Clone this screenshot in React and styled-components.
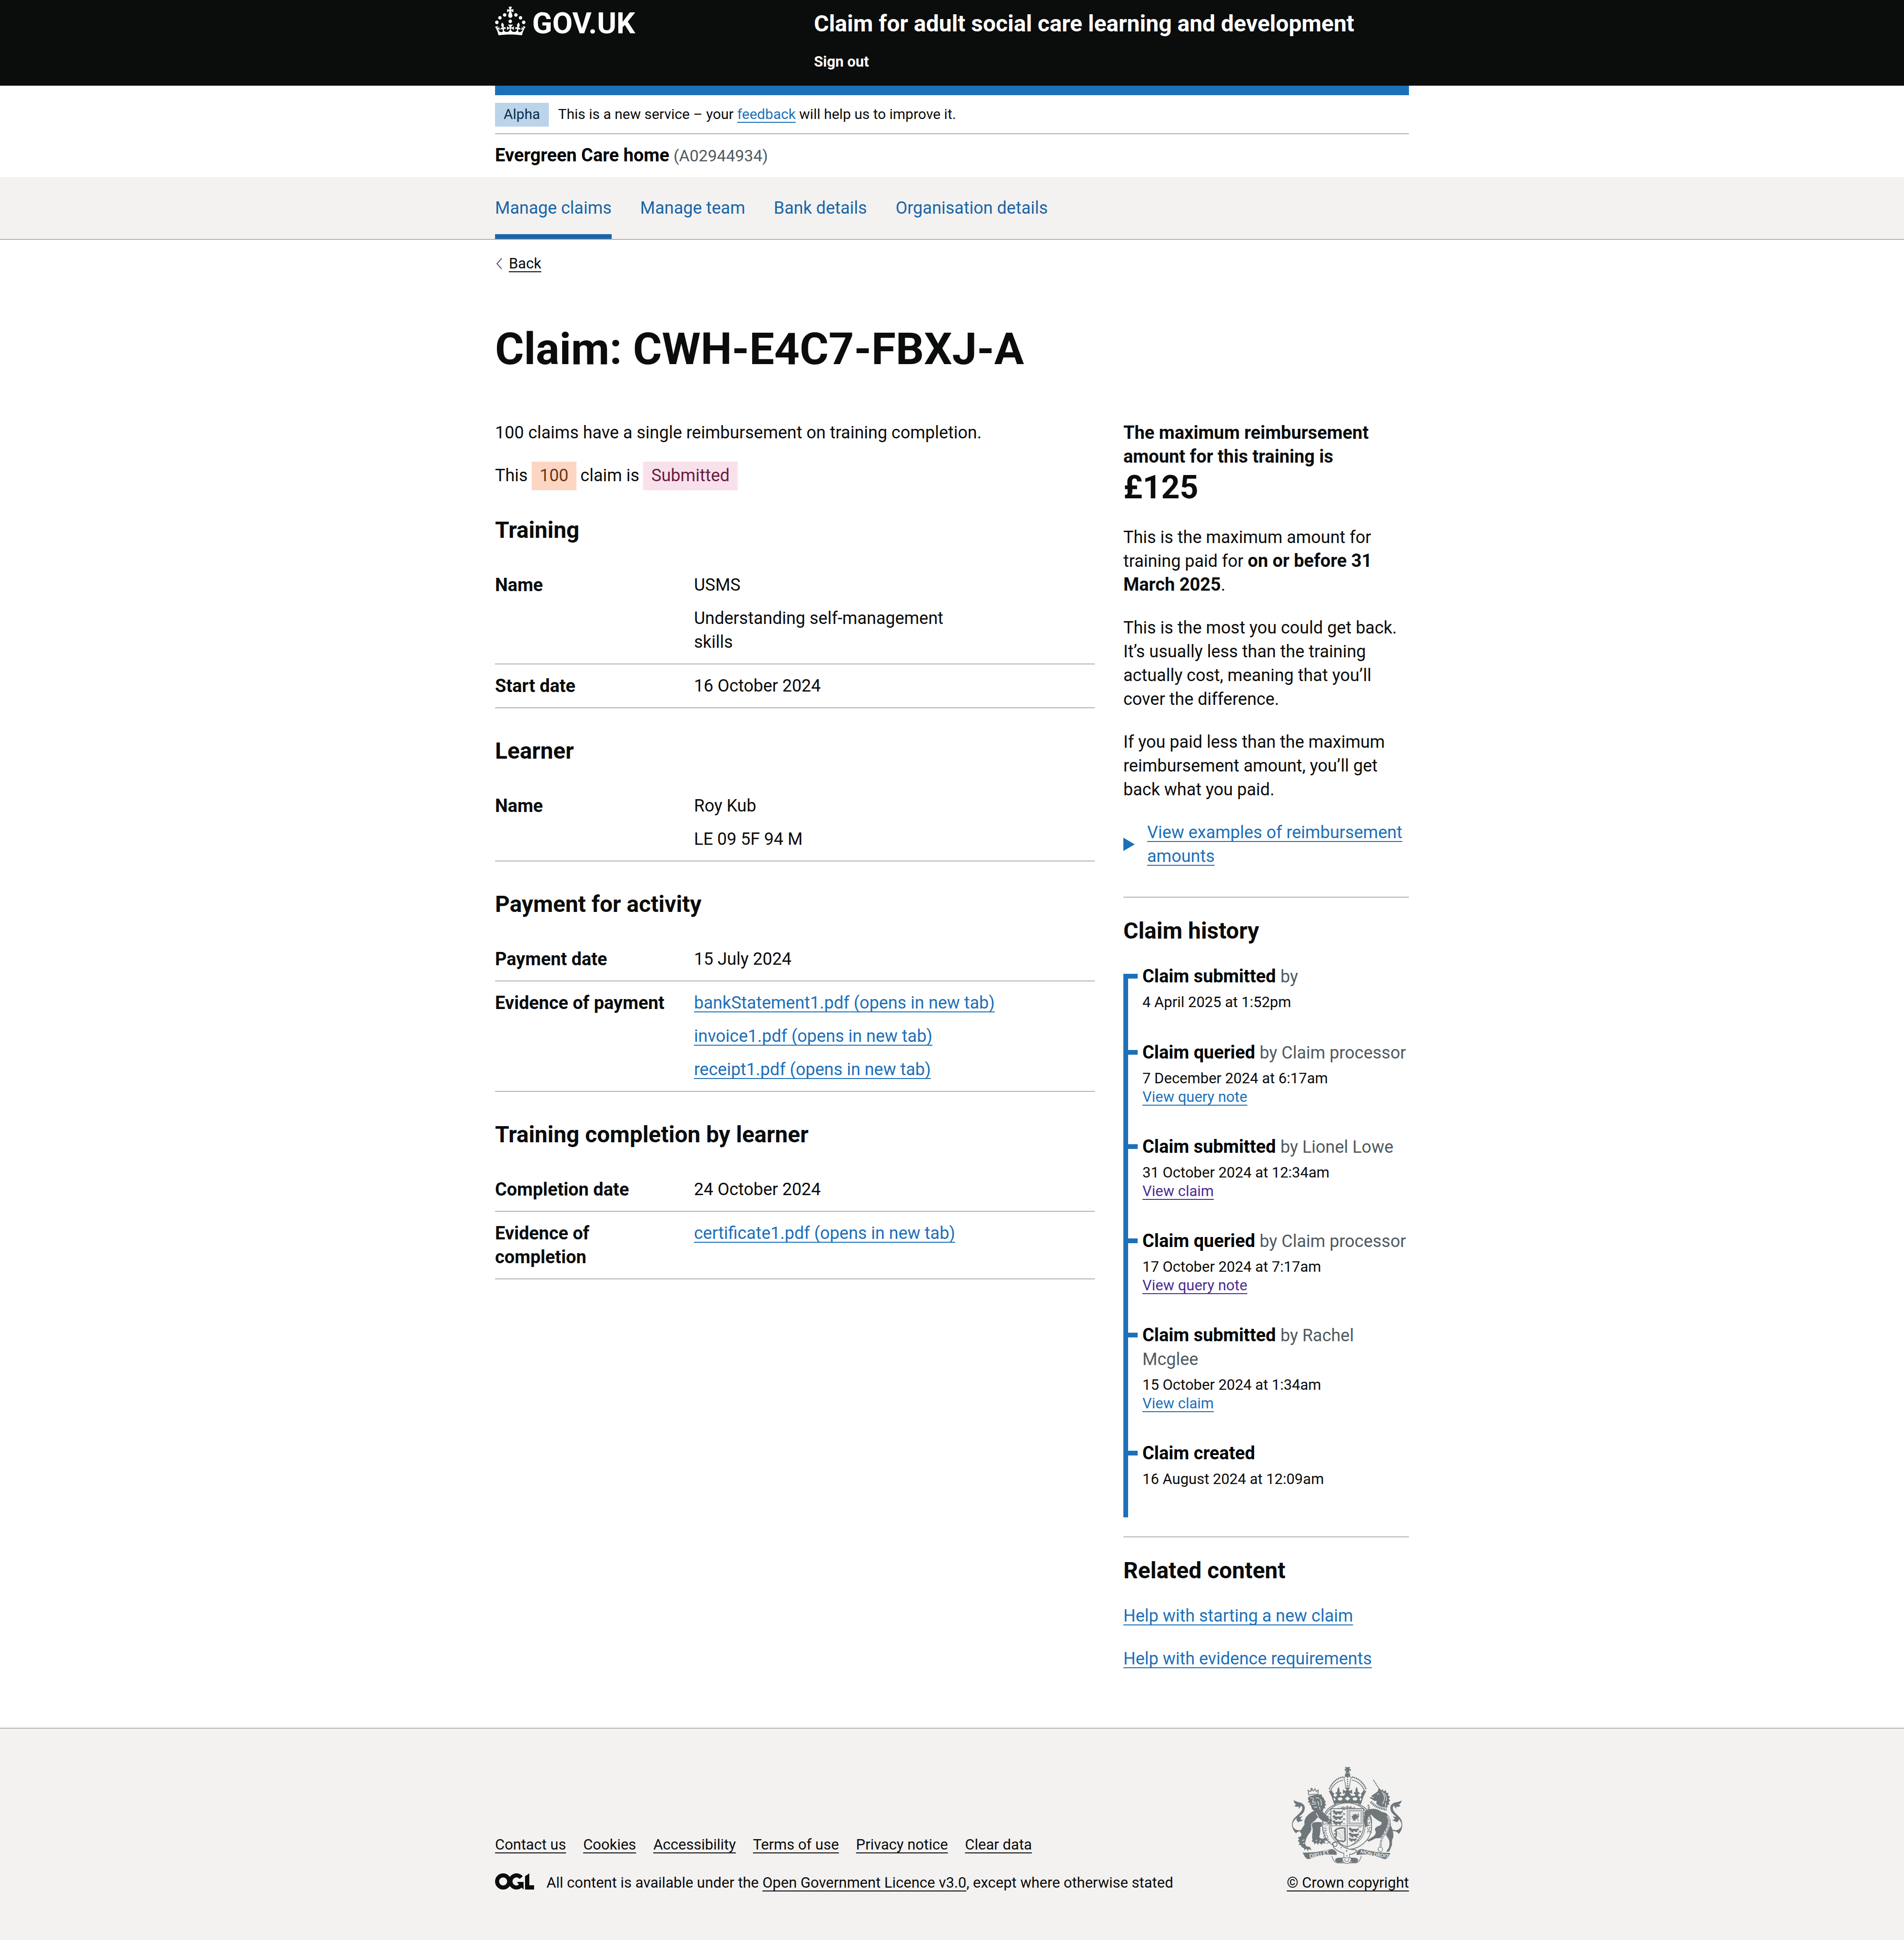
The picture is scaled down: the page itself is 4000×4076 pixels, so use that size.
import React from "react";
import styled, { createGlobalStyle } from "styled-components";

const color = {
  text: "#0b0c0c",
  link: "#1d70b8",
  visited: "#4c2c92",
  nav: "#1a65a6",
  secondary: "#505a5f",
  border: "#b1b4b6",
  panel: "#f3f2f1",
  crest: "#6f777b",
};

const tagTones = {
  blue: { bg: "#bbd4ea", fg: "#0c2d4a" },
  orange: { bg: "#fcd6c3", fg: "#6e3619" },
  pink: { bg: "#f9e1ec", fg: "#6b1c40" },
};

const GlobalStyle = createGlobalStyle`
  *, *::before, *::after { box-sizing: border-box; }
  body {
    margin: 0;
    background: #ffffff;
    color: ${color.text};
    font-family: Roboto, "Liberation Sans", Arial, sans-serif;
    font-size: 36px;
    line-height: 50px;
  }
  h1, h2, h3, p, ul, ol, dl, dd, dt { margin: 0; padding: 0; }
  ul, ol { list-style: none; }
  strong { font-size: 38px; line-height: 1; font-weight: 700; }
`;

const Container = styled.div`
  max-width: 1920px;
  margin: 0 auto;
`;

const Link = styled.a`
  color: ${(p) => (p.$visited ? color.visited : p.$dark ? color.text : color.link)};
  text-decoration: underline;
  text-decoration-thickness: 2px;
  text-underline-offset: 6px;
  text-decoration-skip-ink: none;
`;

/* Header */

const Header = styled.header`
  background: ${color.text};
  color: #ffffff;
`;

const HeaderInner = styled(Container)`
  display: grid;
  grid-template-columns: 670px 1fr;
  padding: 14px 0 30px;
`;

const LogoLink = styled.a`
  color: #ffffff;
  text-decoration: none;
`;

const LogoSvg = styled.svg`
  display: block;
  width: 300px;
  height: 60px;
  overflow: visible;
`;

const LogoText = styled.text`
  font-family: Roboto, "Liberation Sans", Arial, sans-serif;
  font-size: 62px;
  font-weight: 700;
`;

const HeaderContent = styled.div`
  display: flex;
  flex-direction: column;
  align-items: flex-start;
  gap: 30px;
  padding-top: 6px;
`;

const ServiceName = styled.a`
  color: #ffffff;
  font-size: 48px;
  line-height: 60px;
  font-weight: 700;
  text-decoration: none;
`;

const SignOut = styled.a`
  color: #ffffff;
  font-size: 31px;
  line-height: 40px;
  font-weight: 700;
  text-decoration: none;
`;

const BlueBar = styled(Container)`
  height: 20px;
  background: ${color.link};
`;

/* Phase banner and organisation */

const PhaseBanner = styled(Container)`
  display: flex;
  align-items: baseline;
  gap: 20px;
  padding: 16px 0 14px;
  border-bottom: 2px solid ${color.border};
  font-size: 30px;
  line-height: 40px;
`;

const Tag = styled.span`
  display: inline-block;
  padding: ${(p) => (p.$small ? "4px 18px 6px" : "4px 17px 6px")};
  line-height: ${(p) => (p.$small ? "40px" : "50px")};
  background: ${(p) => tagTones[p.$tone].bg};
  color: ${(p) => tagTones[p.$tone].fg};
`;

const Organisation = styled(Container)`
  padding: 20px 0;
  color: #000000;
`;

const OrganisationId = styled.span`
  font-size: 34px;
  line-height: 1;
  color: ${color.secondary};
`;

/* Service navigation */

const NavBar = styled.nav`
  background: ${color.panel};
  border-bottom: 2px solid ${color.border};
`;

const NavList = styled.ul`
  display: flex;
  gap: 60px;
  max-width: 1920px;
  margin: 0 auto;
`;

const NavLink = styled.a`
  display: block;
  padding: 40px 0 30px;
  border-bottom: 10px solid ${(p) => (p.$current ? color.nav : "transparent")};
  color: ${color.nav};
  text-decoration: none;
`;

/* Page */

const BackRow = styled.div`
  display: flex;
  align-items: center;
  gap: 14px;
  padding-top: 30px;
  font-size: 31px;
  line-height: 40px;
`;

const Chevron = styled.svg`
  width: 15px;
  height: 24px;
`;

const PageTitle = styled.h1`
  margin: 110px 0 100px;
  font-size: 93px;
  line-height: 100px;
  font-weight: 700;
`;

const Columns = styled.div`
  display: grid;
  grid-template-columns: minmax(0, 1260px) minmax(0, 600px);
  gap: 60px;
  padding-bottom: 120px;
`;

const Paragraph = styled.p`
  margin-bottom: 40px;
`;

const StatusLine = styled.p`
  display: flex;
  flex-wrap: wrap;
  align-items: baseline;
  gap: 8px;
  margin: -4px 0 34px;
`;

const Heading = styled.h2`
  margin-bottom: 40px;
  font-size: 48px;
  line-height: 60px;
  font-weight: 700;
`;

const Section = styled.section`
  padding-top: 20px;
  & + & { padding-top: 60px; }
`;

const SummaryList = styled.dl`
  display: block;
`;

const SummaryRow = styled.div`
  display: grid;
  grid-template-columns: 30% 1fr;
  column-gap: 40px;
  padding: 20px 0;
  border-bottom: 2px solid ${color.border};
`;

const Key = styled.dt`
  font-size: 38px;
  font-weight: 700;
`;

const Value = styled.dd`
  display: grid;
  gap: 20px;
  max-width: ${(p) => (p.$narrow ? "560px" : "none")};
`;

const AmountHeading = styled.h3`
  margin-bottom: 40px;
  font-size: 38px;
  line-height: 50px;
  font-weight: 700;
`;

const Amount = styled.span`
  display: block;
  font-size: 68px;
  line-height: 80px;
`;

const ExamplesSummary = styled.summary`
  display: flex;
  align-items: center;
  gap: 26px;
  list-style: none;
  cursor: pointer;
  color: ${color.link};
  text-decoration: underline;
  text-decoration-thickness: 2px;
  text-underline-offset: 6px;
  text-decoration-skip-ink: none;
  &::-webkit-details-marker { display: none; }
`;

const Triangle = styled.svg`
  flex: none;
  width: 24px;
  height: 28px;
`;

const SideSection = styled.section`
  margin-top: ${(p) => (p.$tight ? "40px" : "60px")};
  padding-top: 40px;
  border-top: 2px solid ${color.border};
`;

const Timeline = styled.ol`
  display: grid;
  grid-template-columns: 10px 1fr;
`;

const TimelineBar = styled.li`
  grid-column: 1;
  grid-row: 1 / span 6;
  margin-top: 20px;
  background: ${color.link};
`;

const TimelineItem = styled.li`
  grid-column: 2;
  display: grid;
  grid-template-columns: 20px 1fr;
  column-gap: 10px;
  padding-bottom: 60px;
`;

const Tick = styled.span`
  height: 10px;
  margin-top: 20px;
  background: ${color.link};
`;

const EventTitle = styled.h3`
  font-size: 38px;
  line-height: 50px;
  font-weight: 700;
  color: #000000;
`;

const EventBy = styled.span`
  font-size: 36px;
  line-height: 1;
  font-weight: 400;
  color: ${color.secondary};
`;

const EventDate = styled.p`
  margin-top: 10px;
  font-size: 31px;
  line-height: 40px;
`;

const EventAction = styled.p`
  font-size: 31px;
  line-height: 38px;
`;

const RelatedList = styled.ul`
  display: grid;
  gap: 40px;
`;

/* Footer */

const Footer = styled.footer`
  background: ${color.panel};
  border-top: 2px solid ${color.border};
  font-size: 31px;
  line-height: 40px;
`;

const FooterInner = styled(Container)`
  display: flex;
  justify-content: space-between;
  align-items: flex-end;
  padding: 80px 0 100px;
`;

const FooterMeta = styled.div`
  display: grid;
  gap: 40px;
`;

const FooterLinks = styled.ul`
  display: flex;
  flex-wrap: wrap;
  gap: 36px;
`;

const Licence = styled.div`
  display: flex;
  align-items: flex-start;
  gap: 26px;
`;

const OglLogo = styled.svg`
  width: 82px;
  height: 34px;
`;

const Copyright = styled.div`
  display: flex;
  flex-direction: column;
  align-items: flex-end;
  gap: 20px;
`;

const CrestSvg = styled.svg`
  display: block;
  width: 232px;
  height: 204px;
  margin-right: 14px;
  overflow: visible;
`;

const CrestText = styled.text`
  font-family: Lato, "Liberation Sans", sans-serif;
  font-weight: ${(p) => (p.$heavy ? 700 : 400)};
`;

const CROWN =
  "M22.6 10.4c-1 .4-2-.1-2.4-1-.4-.9.1-2 1-2.4.9-.4 2 .1 2.4 1s-.1 2-1 2.4m-5.9 6.7c-.9.4-2-.1-2.4-1-.4-.9.1-2 1-2.4.9-.4 2 .1 2.4 1s-.1 2-1 2.4m10.8-3.7c-1 .4-2-.1-2.4-1-.4-.9.1-2 1-2.4.9-.4 2 .1 2.4 1s0 2-1 2.4m3.3 4.8c-1 .4-2-.1-2.4-1-.4-.9.1-2 1-2.4.9-.4 2 .1 2.4 1s-.1 2-1 2.4M17 4.7l2.3 1.2V2.5l-2.3.7-.2-.2.9-3h-3.4l.9 3-.2.2c-.1.1-2.3-.7-2.3-.7v3.4L15 4.7c.1.1.1.2.2.2l-1.3 4c-.1.2-.1.4-.1.6 0 1.1.8 2 1.9 2.2h.7c1-.2 1.9-1.1 1.9-2.1 0-.2 0-.4-.1-.6l-1.3-4c-.1-.2 0-.2.1-.3m-7.6 5.7c.9.4 2-.1 2.4-1 .4-.9-.1-2-1-2.4-.9-.4-2 .1-2.4 1s0 2 1 2.4m-5 3c.9.4 2-.1 2.4-1 .4-.9-.1-2-1-2.4-.9-.4-2 .1-2.4 1s.1 2 1 2.4m-3.2 4.8c.9.4 2-.1 2.4-1 .4-.9-.1-2-1-2.4-.9-.4-2 .1-2.4 1s0 2 1 2.4m14.8 11c4.4 0 8.6.3 12.3.8 1.1-4.5 2.4-7 3.7-8.8l-2.5-.9c.2 1.3.3 1.9 0 2.7-.4-.4-.8-1.1-1.1-2.3l-1.2 4c.7-.5 1.3-.8 2-.9-1.1 2.5-2.6 3.1-3.5 3-1.1-.2-1.7-1.2-1.5-2.1.3-1.2 1.5-1.5 2.1-.1 1.1-2.3-.8-3-2-2.3 1.9-1.9 2.1-3.5.6-5.6-2.1 1.6-2.1 3.2-1.2 5.5-1.2-1.4-3.2-.6-2.5 1.6.9-1.4 2.1-.5 1.9.8-.2 1.1-1.7 2.1-3.5 1.9-2.7-.2-2.9-2.1-2.9-3.6.7-.1 1.9.5 2.9 1.9l.4-4.3c-1.1 1.1-2.1 1.4-3.2 1.4.4-1.2 2.1-3 2.1-3h-5.4s1.7 1.9 2.1 3c-1.1 0-2.1-.2-3.2-1.4l.4 4.3c1-1.4 2.2-2 2.9-1.9-.1 1.5-.2 3.4-2.9 3.6-1.9.2-3.4-.8-3.5-1.9-.2-1.3 1-2.2 1.9-.8.7-2.3-1.2-3-2.5-1.6.9-2.2.9-3.9-1.2-5.5-1.5 2-1.3 3.7.6 5.6-1.2-.7-3.1 0-2 2.3.6-1.4 1.8-1.1 2.1.1.2.9-.3 1.9-1.5 2.1-.9.2-2.4-.5-3.5-3 .6 0 1.2.3 2 .9l-1.2-4c-.3 1.1-.7 1.9-1.1 2.3-.3-.8-.2-1.4 0-2.7l-2.9.9C1.3 23 2.6 25.5 3.7 30c3.7-.5 7.9-.8 12.3-.8";

function Lion({ x, y, s = 1 }) {
  return (
    <g transform={`translate(${x} ${y}) scale(${s})`} fill={color.crest}>
      <path d="M0 4q8-8 16-3l2 6h34q8-2 10-8l3 12q-6 8-14 8l6 8h-14l-6-6H28l4 8H18l-2-8q-8 4-14 1l10-6Q0 14 0 4z" />
      <path d="M62-2q10-8 18 0M66 18q6 6 14 2" fill="none" stroke={color.crest} strokeWidth="4" />
    </g>
  );
}

/* Royal coat of arms: crown, garter and shield between the lion and the unicorn. */
function Crest() {
  const c = color.crest;
  const bg = color.panel;
  return (
    <CrestSvg viewBox="162 95 696 613" aria-hidden="true">
      {/* garter */}
      <ellipse cx="510" cy="470" rx="155" ry="147" fill={bg} stroke={c} strokeWidth="5" />
      <path d="M356 455C350 400 390 345 440 332M664 455C670 400 630 345 580 332" fill="none" stroke={c} strokeWidth="5" />
      <ellipse cx="510" cy="472" rx="113" ry="122" fill="none" stroke={c} strokeWidth="4" />
      <path id="garter-line" d="M408 570A128 126 0 1 1 612 570" fill="none" />
      <CrestText fontSize="37" fill={c}>
        <textPath href="#garter-line">HONI·SOIT·QUI·MAL·Y·PENSE</textPath>
      </CrestText>

      {/* shield */}
      <path d="M408 360H614V470C614 530 570 580 511 602C450 580 408 530 408 470Z" fill={bg} stroke={c} strokeWidth="5" />
      <path d="M511 360V600M408 468H614" stroke={c} strokeWidth="4" />
      <Lion x={418} y={370} />
      <Lion x={418} y={402} />
      <Lion x={418} y={434} />
      <Lion x={520} y={480} />
      <Lion x={520} y={512} />
      <Lion x={520} y={544} s={0.8} />
      <rect x="522" y="370" width="82" height="86" fill="none" stroke={c} strokeWidth="4" />
      <rect x="530" y="378" width="66" height="70" fill="none" stroke={c} strokeWidth="2" />
      <path d="M545 392l10 6 6-8 8 8 10-6-4 14 10-4-2 12-12 2 4 10-10-2-4 14-8-6-8 6 4-16-12 2 6-10-8-8 14-2z" fill={c} />
      <path d="M580 388q8 14 0 26t2 24" fill="none" stroke={c} strokeWidth="4" />
      <path d="M438 494q20-16 58-12l2 72q-6 20-20 10q-30 4-42-20q12-22 2-50z" fill="none" stroke={c} strokeWidth="9" />
      <path d="M450 500l40 44M450 512l36 40M450 526l28 30M464 494l28 30M478 492l16 18" stroke={c} strokeWidth="2" />
      <path d="M428 500h12M426 520h14M426 540h12" stroke={c} strokeWidth="7" />

      {/* imperial crown */}
      <path d="M496 97H530L524 110H534V122L521 117L527 134H499L505 117L495 122V108L504 111Z" fill={c} />
      <circle cx="513" cy="148" r="17" fill={c} />
      <path d="M498 134H528" stroke={bg} strokeWidth="2" />
      <path d="M481 161Q425 172 398 236M545 161Q601 172 630 236" fill="none" stroke={c} strokeWidth="10" strokeLinecap="round" strokeDasharray="0.1 12.5" />
      <path d="M486 179Q430 188 404 250M540 179Q596 188 622 250" fill="none" stroke={c} strokeWidth="5" />
      <path d="M489 162Q497 180 500 218L526 218Q529 180 537 162Q513 150 489 162Z" fill={bg} stroke={c} strokeWidth="4" />
      <path d="M513 162V216" fill="none" stroke={c} strokeWidth="9" strokeLinecap="round" strokeDasharray="0.1 13" />
      <path d="M428 332L413 284L394 247L408 250L411 240Q420 262 430 264Q418 280 432 284Q448 286 446 268Q438 264 436 268Q436 252 448 256Q446 236 456 222Q466 238 462 256Q474 250 474 266Q468 264 464 270Q468 288 484 282Q496 276 498 258L484 268V238L498 248L508 240L494 226H532L518 240L528 248L542 238V268L528 258Q530 276 542 282Q558 288 562 270Q558 264 552 266Q552 250 564 256Q560 238 570 222Q580 236 578 256Q590 252 590 268Q588 264 580 268Q578 286 594 284Q608 280 596 264Q606 262 615 240L618 250L632 247L613 284L598 332Q513 312 428 332Z" fill={c} />
      <path d="M424 286Q513 268 602 286L596 318Q513 300 430 318Z" fill={c} />
      <path d="M513 283l17 13-17 13-17-13z" fill={bg} />
      <ellipse cx="466" cy="298" rx="15" ry="10" fill={bg} />
      <ellipse cx="560" cy="298" rx="15" ry="10" fill={bg} />
      <path d="M424 296l8-6 6 14-8 6zM602 296l-8-6-6 14 8 6z" fill={bg} />

      {/* lion supporter */}
      <path d="M268 274L264 244L278 252L286 236L298 248L308 234L316 252L328 242L326 270Q298 264 268 274Z" fill="none" stroke={c} strokeWidth="5" />
      <path d="M286 228V248M278 234H294" stroke={c} strokeWidth="5" />
      <path d="M266 286Q300 268 350 270L352 284Q366 290 366 304L376 316L370 324L378 338L368 344L374 358L360 358L358 374Q330 382 300 372L288 362L282 340L272 332L280 326L262 318L270 306L262 300Z" fill={c} />
      <path d="M276 294Q288 288 298 296M312 292Q324 288 334 296M298 298L292 318H312M286 330Q300 336 316 326M322 312Q334 320 330 340M340 300Q352 316 346 340M300 348Q312 356 322 346M336 348L340 366" fill="none" stroke={bg} strokeWidth="4" />
      <path d="M300 374Q270 388 250 414Q236 440 242 458Q228 480 212 506Q228 520 218 534L200 542L208 556L198 562L212 576L204 586L220 592Q222 606 238 608L240 622L254 612L262 630L268 614L286 622L276 602L256 598Q244 592 246 572Q252 540 270 518Q286 504 286 470L290 472Q296 500 290 520Q288 546 292 556L286 566L300 572L304 586L316 574L326 588L334 574L350 588L356 576L374 582L366 562L384 556L374 546L350 550L334 540Q344 512 340 476L352 472L350 446Q322 440 286 450Q310 436 326 412Q352 440 384 446L396 462L402 452L418 460L410 444L418 430L398 426L384 404Q366 396 356 376Z" fill={c} />
      <path d="M290 450Q278 470 290 486M330 410Q318 400 316 386M240 556l-14 6M244 576l-14 4M320 556l-8 8M344 560l-8 8M400 436l-12 6" fill="none" stroke={bg} strokeWidth="4" />
      <path d="M240 488Q214 500 192 494Q160 480 168 450Q178 424 214 404Q248 380 242 346Q236 326 212 320Q196 318 172 306Q176 328 190 334L176 342Q190 352 206 346L204 362Q216 352 220 340Q234 352 222 374Q206 394 182 414Q160 434 162 466Q166 494 188 516Q196 502 216 502Q232 500 246 492Z" fill={c} />
      <path d="M198 398L212 412L228 406L214 426L232 432L200 446L190 430Z" fill={c} />
      <circle cx="190" cy="472" r="13" fill={bg} />

      {/* unicorn supporter */}
      <path d="M676 178L716 240" stroke={c} strokeWidth="6" strokeDasharray="9 3" />
      <path d="M650 290L668 286L664 278Q690 262 706 248Q704 238 712 232Q722 234 724 246L734 236L740 250L756 244L756 258L772 262L766 274L782 286L772 294L782 310L772 318L778 334L764 336L766 352L748 352Q724 350 700 334Q690 326 698 310Q682 314 668 300Z" fill={c} />
      <path d="M730 252Q746 270 746 296Q744 316 732 330M744 262Q762 282 758 312M700 268l12-2M668 290l10-2M752 322Q756 336 750 346" fill="none" stroke={bg} strokeWidth="4" />
      <path d="M660 316Q680 340 704 350T760 366" fill="none" stroke={c} strokeWidth="14" strokeDasharray="7 4" />
      <path d="M640 366Q690 350 728 380Q762 384 770 404Q790 424 786 466Q804 500 802 538Q790 560 794 586L784 612L776 630L756 632L774 604Q784 570 768 546Q752 524 746 498Q742 540 716 546Q690 544 672 556L646 568L636 560L664 542Q690 530 692 506Q674 484 706 470Q730 464 728 446Q690 430 662 396Q644 404 638 430L640 466L628 478L616 446L620 396Q612 378 640 366Z" fill={c} />
      <path d="M780 486Q806 500 828 494Q860 480 852 450Q842 424 812 404Q778 380 784 346Q790 326 814 320Q830 318 856 308Q850 328 836 334L848 342Q834 352 820 346L822 362Q810 352 806 340Q792 352 804 374Q820 394 842 414Q860 434 858 466Q858 496 836 520Q828 502 806 502Q790 498 780 486Z" fill={c} />
      <path d="M828 398L814 412L798 406L812 426L794 432L826 446L838 430Z" fill={c} />
      <circle cx="832" cy="472" r="13" fill={bg} />
      <path d="M762 404Q784 420 774 460Q760 506 738 534Q720 560 722 600" fill="none" stroke={bg} strokeWidth="16" />
      <path d="M762 404Q784 420 774 460Q760 506 738 534Q720 560 722 600" fill="none" stroke={c} strokeWidth="12" strokeDasharray="18 6" />
      <path d="M762 404Q784 420 774 460Q760 506 738 534Q720 560 722 600" fill="none" stroke={bg} strokeWidth="5" strokeDasharray="12 12" strokeDashoffset="-3" />
      <circle cx="720" cy="616" r="14" fill="none" stroke={c} strokeWidth="4" />
      <path d="M642 336Q654 352 640 372" fill="none" stroke={c} strokeWidth="12" strokeDasharray="7 4" />

      {/* buckle and scroll */}
      <path d="M229 637Q330 638 414 614Q434 618 444 636V652Q352 640 268 679Q248 676 240 656Z" fill={c} />
      <path d="M784 640Q690 638 600 614Q578 618 570 636V652Q660 640 746 679Q766 676 774 656Z" fill={c} />
      <path id="scroll-left" d="M274 672Q340 662 418 640" fill="none" />
      <path id="scroll-right" d="M592 640Q670 660 764 670" fill="none" />
      <CrestText $heavy fontSize="34" fill={bg}>
        <textPath href="#scroll-left">DIEU ET</textPath>
      </CrestText>
      <CrestText $heavy fontSize="31" fill={bg}>
        <textPath href="#scroll-right">MON DROIT</textPath>
      </CrestText>
      <path d="M414 658Q424 700 450 702H564Q590 700 600 658" fill="none" stroke={c} strokeWidth="4" />
      <path d="M434 682Q440 666 480 670V700H452Q436 698 434 682ZM580 682Q574 666 536 670V700H564Q578 698 580 682Z" fill={c} />
      <path d="M418 580Q424 566 448 570Q490 612 540 618Q566 616 570 626Q556 650 520 648Q460 640 426 606Z" fill={bg} stroke={c} strokeWidth="5" />
      <circle cx="434" cy="585" r="13" fill={bg} stroke={c} strokeWidth="5" />
      <circle cx="473" cy="606" r="4" fill={c} />
      <circle cx="507" cy="626" r="5" fill={c} />
      <path d="M490 640V676H526V644" fill={bg} stroke={c} strokeWidth="4" />
      <circle cx="508" cy="657" r="4" fill={c} />
      <path d="M480 670Q480 706 508 706T536 670Z" fill={bg} stroke={c} strokeWidth="4" />
      <path d="M496 676Q494 694 508 694T520 676" fill="none" stroke={c} strokeWidth="4" />
    </CrestSvg>
  );
}

const navItems = ["Manage claims", "Manage team", "Bank details", "Organisation details"];

const sections = [
  {
    title: "Training",
    rows: [
      { key: "Name", values: ["USMS", "Understanding self-management skills"], narrow: true },
      { key: "Start date", values: ["16 October 2024"] },
    ],
  },
  { title: "Learner", rows: [{ key: "Name", values: ["Roy Kub", "LE 09 5F 94 M"] }] },
  {
    title: "Payment for activity",
    rows: [
      { key: "Payment date", values: ["15 July 2024"] },
      { key: "Evidence of payment", files: ["bankStatement1.pdf", "invoice1.pdf", "receipt1.pdf"] },
    ],
  },
  {
    title: "Training completion by learner",
    rows: [
      { key: "Completion date", values: ["24 October 2024"] },
      { key: "Evidence of completion", files: ["certificate1.pdf"] },
    ],
  },
];

const history = [
  { title: "Claim submitted", by: "by", date: "4 April 2025 at 1:52pm" },
  { title: "Claim queried", by: "by Claim processor", date: "7 December 2024 at 6:17am", action: "View query note" },
  { title: "Claim submitted", by: "by Lionel Lowe", date: "31 October 2024 at 12:34am", action: "View claim", visited: true },
  { title: "Claim queried", by: "by Claim processor", date: "17 October 2024 at 7:17am", action: "View query note", visited: true },
  { title: "Claim submitted", by: "by Rachel Mcglee", date: "15 October 2024 at 1:34am", action: "View claim" },
  { title: "Claim created", date: "16 August 2024 at 12:09am" },
];

const footerLinks = ["Contact us", "Cookies", "Accessibility", "Terms of use", "Privacy notice", "Clear data"];

export default function App() {
  return (
    <>
      <GlobalStyle />
      <Header>
        <HeaderInner>
          <LogoLink href="#home" aria-label="GOV.UK">
            <LogoSvg viewBox="0 0 300 60" fill="currentColor">
              <path d={CROWN} transform="scale(2)" />
              <LogoText x="78" y="56">GOV.UK</LogoText>
            </LogoSvg>
          </LogoLink>
          <HeaderContent>
            <ServiceName href="#service">Claim for adult social care learning and development</ServiceName>
            <SignOut href="#sign-out">Sign out</SignOut>
          </HeaderContent>
        </HeaderInner>
      </Header>
      <BlueBar />
      <PhaseBanner>
        <Tag $tone="blue" $small>Alpha</Tag>
        <span>
          This is a new service – your <Link href="#feedback">feedback</Link> will help us to improve it.
        </span>
      </PhaseBanner>
      <Organisation>
        <strong>Evergreen Care home</strong> <OrganisationId>(A02944934)</OrganisationId>
      </Organisation>
      <NavBar aria-label="Service">
        <NavList>
          {navItems.map((item, i) => (
            <li key={item}>
              <NavLink href="#nav" $current={i === 0} aria-current={i === 0 ? "page" : undefined}>
                {item}
              </NavLink>
            </li>
          ))}
        </NavList>
      </NavBar>

      <Container as="main">
        <BackRow>
          <Chevron viewBox="0 0 15 24" aria-hidden="true">
            <path d="M14 1L4 12L14 23" fill="none" stroke={color.secondary} strokeWidth="2" />
          </Chevron>
          <Link href="#back" $dark>Back</Link>
        </BackRow>
        <PageTitle>Claim: CWH-E4C7-FBXJ-A</PageTitle>

        <Columns>
          <div>
            <Paragraph>100 claims have a single reimbursement on training completion.</Paragraph>
            <StatusLine>
              This <Tag $tone="orange">100</Tag> claim is <Tag $tone="pink">Submitted</Tag>
            </StatusLine>
            {sections.map((section) => (
              <Section key={section.title}>
                <Heading>{section.title}</Heading>
                <SummaryList>
                  {section.rows.map((row) => (
                    <SummaryRow key={row.key}>
                      <Key>{row.key}</Key>
                      <Value $narrow={row.narrow}>
                        {row.values && row.values.map((v) => <p key={v}>{v}</p>)}
                        {row.files &&
                          row.files.map((f) => (
                            <p key={f}>
                              <Link href="#file">{f} (opens in new tab)</Link>
                            </p>
                          ))}
                      </Value>
                    </SummaryRow>
                  ))}
                </SummaryList>
              </Section>
            ))}
          </div>

          <aside>
            <AmountHeading>
              The maximum reimbursement amount for this training is <Amount>£125</Amount>
            </AmountHeading>
            <Paragraph>
              This is the maximum amount for training paid for <strong>on or before 31 March 2025</strong>.
            </Paragraph>
            <Paragraph>
              This is the most you could get back. It’s usually less than the training actually cost, meaning that
              you’ll cover the difference.
            </Paragraph>
            <Paragraph>
              If you paid less than the maximum reimbursement amount, you’ll get back what you paid.
            </Paragraph>
            <details>
              <ExamplesSummary>
                <Triangle viewBox="0 0 24 28" aria-hidden="true">
                  <path d="M0 0L24 14L0 28Z" fill={color.link} />
                </Triangle>
                <span>View examples of reimbursement amounts</span>
              </ExamplesSummary>
            </details>

            <SideSection>
              <Heading>Claim history</Heading>
              <Timeline>
                <TimelineBar aria-hidden="true" />
                {history.map((event) => (
                  <TimelineItem key={event.date}>
                    <Tick />
                    <div>
                      <EventTitle>
                        {event.title} {event.by && <EventBy>{event.by}</EventBy>}
                      </EventTitle>
                      <EventDate>{event.date}</EventDate>
                      {event.action && (
                        <EventAction>
                          <Link href="#event" $visited={event.visited}>{event.action}</Link>
                        </EventAction>
                      )}
                    </div>
                  </TimelineItem>
                ))}
              </Timeline>
            </SideSection>

            <SideSection $tight>
              <Heading>Related content</Heading>
              <RelatedList>
                <li><Link href="#start">Help with starting a new claim</Link></li>
                <li><Link href="#evidence">Help with evidence requirements</Link></li>
              </RelatedList>
            </SideSection>
          </aside>
        </Columns>
      </Container>

      <Footer>
        <FooterInner>
          <FooterMeta>
            <FooterLinks>
              {footerLinks.map((item) => (
                <li key={item}><Link href="#footer" $dark>{item}</Link></li>
              ))}
            </FooterLinks>
            <Licence>
              <OglLogo viewBox="0 0 82 34" fill="none" stroke={color.text} strokeWidth="8.5" aria-hidden="true">
                <circle cx="17" cy="17" r="12.7" />
                <path d="M55 9A12.7 12.7 0 1 0 54 26" />
                <path d="M46 18H60V34L56 30L52 26Z" fill={color.text} stroke="none" />
                <path d="M63 6L72 0V25H82V34H63Z" fill={color.text} stroke="none" />
              </OglLogo>
              <span>
                All content is available under the <Link href="#licence" $dark>Open Government Licence v3.0</Link>,
                except where otherwise stated
              </span>
            </Licence>
          </FooterMeta>
          <Copyright>
            <Crest />
            <Link href="#copyright" $dark>© Crown copyright</Link>
          </Copyright>
        </FooterInner>
      </Footer>
    </>
  );
}
